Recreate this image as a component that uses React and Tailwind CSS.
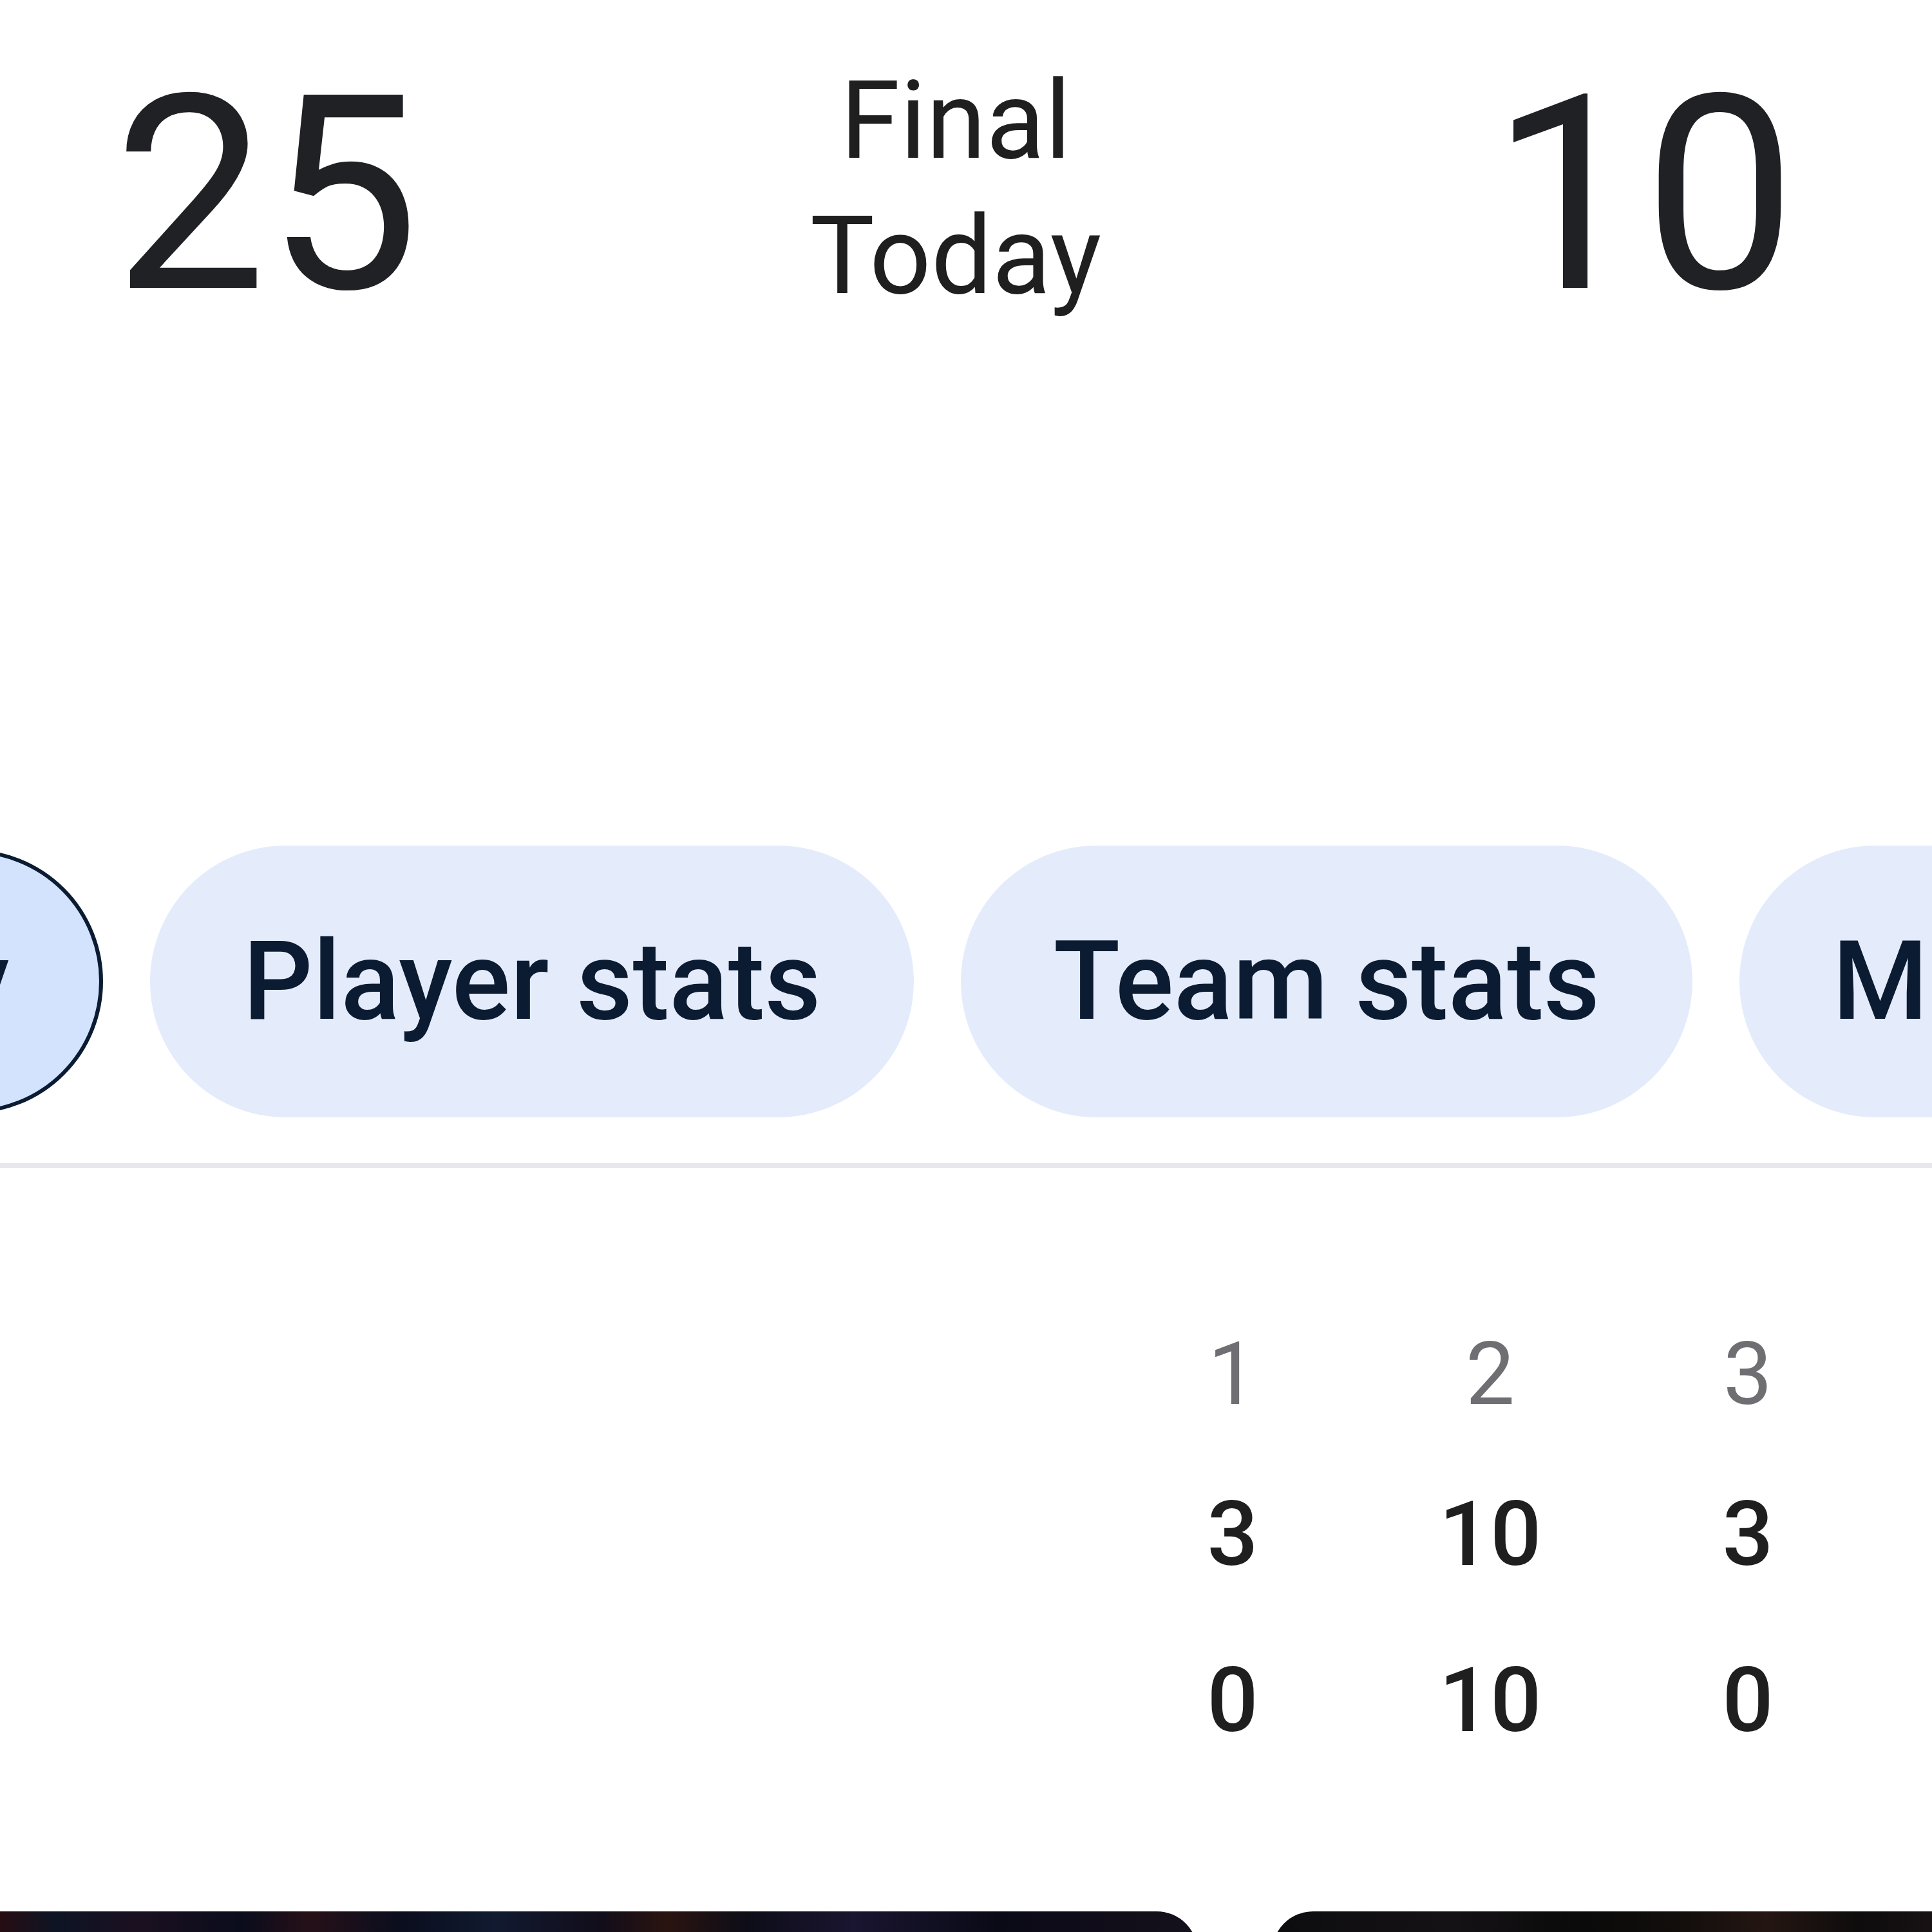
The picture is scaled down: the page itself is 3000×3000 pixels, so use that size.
export default function App() {
  return (
    <div className="w-[3000px] h-[3000px] bg-white overflow-hidden relative font-['Roboto',sans-serif]">
      {/* Score header */}
      <div className="h-[1313px] flex pt-[83px]">
        <div className="w-[828px] flex justify-center pt-[9px]">
          <span className="text-[422px] leading-none text-[#202124] font-normal">25</span>
        </div>
        <div className="w-[1312px] flex flex-col items-center">
          <span className="text-[168px] leading-[210px] text-[#1f1f1f]">Final</span>
          <span className="text-[168px] leading-[210px] text-[#1f1f1f]">Today</span>
        </div>
        <div className="w-[824px] flex justify-center pt-[9px]">
          <span className="text-[422px] leading-none text-[#202124] font-normal">10</span>
        </div>
      </div>

      {/* Tabs */}
      <div className="flex items-center gap-[73px] ml-[-862px] whitespace-nowrap">
        <div className="h-[410px] px-[140px] flex items-center rounded-full bg-[#d3e3fd] border-[6px] border-[#0b1b32] shrink-0">
          <span className="text-[170px] font-medium text-[#0b1b32] leading-none">Summary</span>
        </div>
        <div className="h-[422px] px-[144px] flex items-center rounded-full bg-[#e4ecfc] shrink-0">
          <span className="text-[170px] font-medium text-[#0b1b32] leading-none">Player stats</span>
        </div>
        <div className="h-[422px] px-[144px] flex items-center rounded-full bg-[#e4ecfc] shrink-0">
          <span className="text-[170px] font-medium text-[#0b1b32] leading-none">Team stats</span>
        </div>
        <div className="h-[422px] px-[144px] flex items-center rounded-full bg-[#e4ecfc] shrink-0">
          <span className="text-[170px] font-medium text-[#0b1b32] leading-none">More</span>
        </div>
      </div>

      <div className="mt-[71px] h-[8px] bg-[#e8e8ec]" />

      {/* Quarter table */}
      <div className="grid grid-cols-[1fr_400px_400px_400px] pr-[86px] mt-[252px]">
        <div />
        <div className="text-center text-[136px] leading-none text-[#6f6f73]">1</div>
        <div className="text-center text-[136px] leading-none text-[#6f6f73]">2</div>
        <div className="text-center text-[136px] leading-none text-[#6f6f73]">3</div>

        <div className="mt-[110px]" />
        <div className="mt-[110px] text-center text-[140px] leading-none font-medium text-[#1f1f1f]">3</div>
        <div className="mt-[110px] text-center text-[140px] leading-none font-medium text-[#1f1f1f]">10</div>
        <div className="mt-[110px] text-center text-[140px] leading-none font-medium text-[#1f1f1f]">3</div>

        <div className="mt-[118px]" />
        <div className="mt-[118px] text-center text-[140px] leading-none font-medium text-[#1f1f1f]">0</div>
        <div className="mt-[118px] text-center text-[140px] leading-none font-medium text-[#1f1f1f]">10</div>
        <div className="mt-[118px] text-center text-[140px] leading-none font-medium text-[#1f1f1f]">0</div>
      </div>

      {/* Video cards peeking at bottom */}
      <div className="flex gap-[115px] mt-[258px] ml-[-200px]">
        <div className="w-[2060px] h-[400px] shrink-0 rounded-[64px] bg-[linear-gradient(90deg,#1a0810_0%,#0b1020_6%,#2a0c10_9%,#0d1424_14%,#1b1020_20%,#0a0c1c_28%,#261018_33%,#0a0e1e_40%,#111a30_47%,#120d1a_55%,#2a1410_60%,#0d0d18_66%,#1a1530_74%,#0a0a16_85%,#15101c_100%)]" />
        <div className="w-[1400px] h-[400px] shrink-0 rounded-[64px] bg-[linear-gradient(90deg,#0c0c0e_0%,#151215_20%,#0a0a0a_35%,#120e0c_45%,#241612_55%,#0e0c0c_65%,#1c1418_78%,#0a0a0e_90%,#16121a_100%)]" />
      </div>
    </div>
  );
}
